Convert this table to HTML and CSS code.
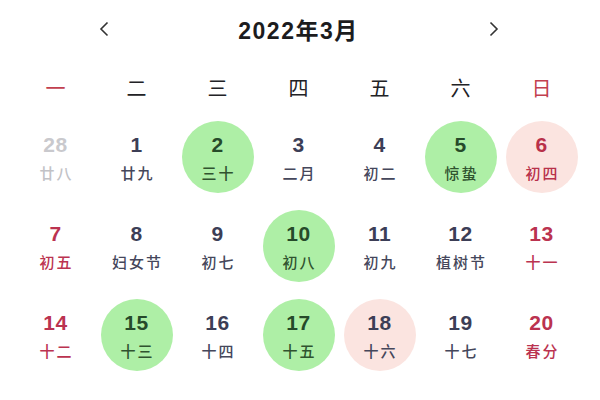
FILE: index.html
```html
<!DOCTYPE html>
<html lang="zh">
<head>
<meta charset="utf-8">
<link rel="stylesheet" href="styles.css">
</head>
<body>
<div class="cal">
  <div class="header">
    <svg class="arrow" width="10" height="16" viewBox="0 0 10 16"><polyline points="8.5,1.5 2,8 8.5,14.5" fill="none" stroke="#333" stroke-width="1.6"/></svg>
    <div class="title">2022年3月</div>
    <svg class="arrow" width="10" height="16" viewBox="0 0 10 16"><polyline points="1.5,1.5 8,8 1.5,14.5" fill="none" stroke="#333" stroke-width="1.6"/></svg>
  </div>
  <div class="weekdays">
    <div class="wd red">一</div><div class="wd">二</div><div class="wd">三</div><div class="wd">四</div><div class="wd">五</div><div class="wd">六</div><div class="wd red">日</div>
  </div>
  <div class="days">
    <div class="cell"><div class="day other"><span class="n">28</span><span class="l">廿八</span></div></div>
    <div class="cell"><div class="day"><span class="n">1</span><span class="l">廿九</span></div></div>
    <div class="cell"><div class="day green"><span class="n">2</span><span class="l">三十</span></div></div>
    <div class="cell"><div class="day"><span class="n">3</span><span class="l">二月</span></div></div>
    <div class="cell"><div class="day"><span class="n">4</span><span class="l">初二</span></div></div>
    <div class="cell"><div class="day green"><span class="n">5</span><span class="l">惊蛰</span></div></div>
    <div class="cell"><div class="day pink red"><span class="n">6</span><span class="l">初四</span></div></div>

    <div class="cell"><div class="day red"><span class="n">7</span><span class="l">初五</span></div></div>
    <div class="cell"><div class="day"><span class="n">8</span><span class="l">妇女节</span></div></div>
    <div class="cell"><div class="day"><span class="n">9</span><span class="l">初七</span></div></div>
    <div class="cell"><div class="day green"><span class="n">10</span><span class="l">初八</span></div></div>
    <div class="cell"><div class="day"><span class="n">11</span><span class="l">初九</span></div></div>
    <div class="cell"><div class="day"><span class="n">12</span><span class="l">植树节</span></div></div>
    <div class="cell"><div class="day red"><span class="n">13</span><span class="l">十一</span></div></div>

    <div class="cell"><div class="day red"><span class="n">14</span><span class="l">十二</span></div></div>
    <div class="cell"><div class="day green"><span class="n">15</span><span class="l">十三</span></div></div>
    <div class="cell"><div class="day"><span class="n">16</span><span class="l">十四</span></div></div>
    <div class="cell"><div class="day green"><span class="n">17</span><span class="l">十五</span></div></div>
    <div class="cell"><div class="day pink"><span class="n">18</span><span class="l">十六</span></div></div>
    <div class="cell"><div class="day"><span class="n">19</span><span class="l">十七</span></div></div>
    <div class="cell"><div class="day red"><span class="n">20</span><span class="l">春分</span></div></div>

    <div class="cell"><div class="day red"><span class="n">21</span><span class="l">十九</span></div></div>
    <div class="cell"><div class="day"><span class="n">22</span><span class="l">二十</span></div></div>
    <div class="cell"><div class="day"><span class="n">23</span><span class="l">廿一</span></div></div>
    <div class="cell"><div class="day"><span class="n">24</span><span class="l">廿二</span></div></div>
    <div class="cell"><div class="day"><span class="n">25</span><span class="l">廿三</span></div></div>
    <div class="cell"><div class="day"><span class="n">26</span><span class="l">廿四</span></div></div>
    <div class="cell"><div class="day red"><span class="n">27</span><span class="l">廿五</span></div></div>
  </div>
</div>
</body>
</html>
```

FILE: styles.css
```css
html, body {
  margin: 0;
  padding: 0;
  background: #ffffff;
  overflow: hidden;
}
body {
  font-family: "Noto Sans CJK SC", "Noto Sans", sans-serif;
  color: #3c3e56;
}
.cal {
  width: 567px;
  margin-left: 15px;
}
.header {
  width: 400px;
  height: 58px;
  margin: 0 auto;
  display: grid;
  grid-template-columns: 10px 1fr 10px;
  align-items: center;
}
.arrow {
  display: block;
}
.title {
  text-align: center;
  font-family: "Liberation Sans", "Noto Sans CJK SC", sans-serif;
  font-size: 23px;
  font-weight: 700;
  letter-spacing: 1.5px;
  color: #1c1c1e;
}
.weekdays {
  height: 50px;
  margin-top: 4px;
  display: grid;
  grid-template-columns: repeat(7, 81px);
  align-items: center;
}
.wd {
  text-align: center;
  font-size: 20px;
  color: #222226;
}
.wd.red {
  color: #c2404f;
}
.days {
  display: grid;
  grid-template-columns: repeat(7, 81px);
  grid-auto-rows: 89px;
}
.cell {
  display: flex;
  align-items: center;
  justify-content: center;
}
.day {
  width: 72px;
  height: 72px;
  border-radius: 50%;
  display: flex;
  flex-direction: column;
  align-items: center;
  justify-content: center;
  gap: 6px;
  padding-top: 3px;
  box-sizing: border-box;
  color: #3c3e56;
}
.n {
  font-family: "Liberation Sans", "Noto Sans", sans-serif;
  font-size: 21px;
  font-weight: 700;
  line-height: 24px;
  letter-spacing: 0.5px;
}
.l {
  font-size: 15px;
  font-weight: 500;
  line-height: 20px;
  letter-spacing: 2px;
  margin-right: -2px;
  color: #45475b;
}
.day.other .n { color: #c9c9cd; }
.day.other .l { color: #c2c2c6; }
.day.red .n, .day.red .l { color: #bb3350; }
.day.green {
  background: #aeefa6;
}
.day.green .n { color: #264a2a; }
.day.green .l { color: #30532f; }
.day.pink {
  background: #fbe4e0;
}
.day.pink.red .n, .day.pink.red .l { color: #b8314a; }
```
